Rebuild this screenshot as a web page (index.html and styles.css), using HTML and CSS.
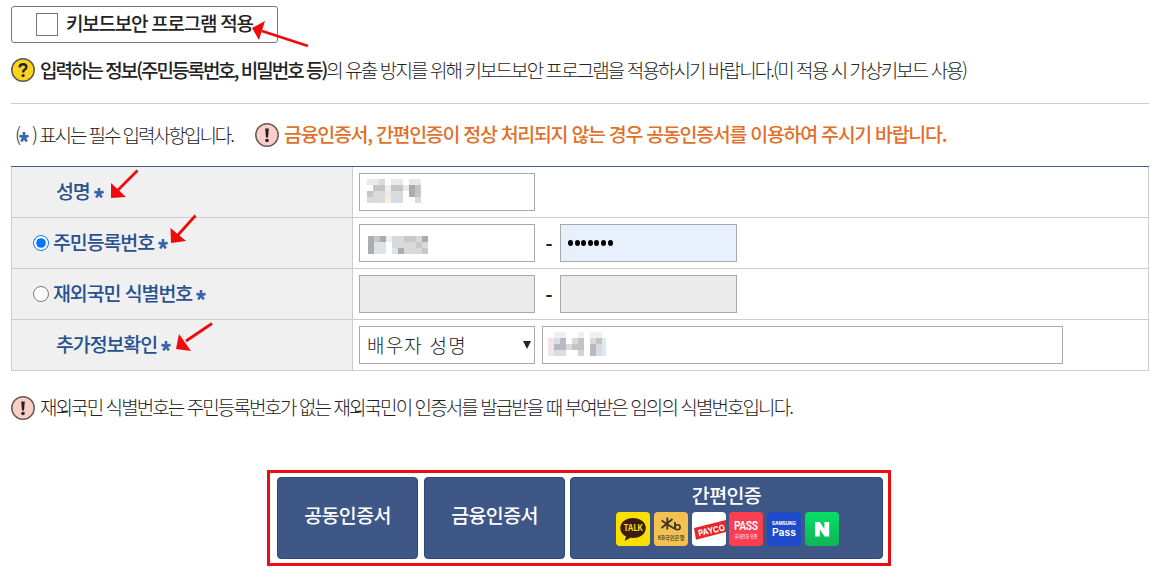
FILE: index.html
```
<!DOCTYPE html>
<html lang="ko">
<head>
    <meta charset="UTF-8">
    <meta name="viewport" content="width=device-width, initial-scale=1.0">
    <title>본인확인</title>
    <link rel="stylesheet" href="styles.css">
</head>
<body>
    <main class="page">
        <label class="security">
            <input type="checkbox" class="security-check">
            <span class="security-text">키보드보안 프로그램 적용</span>
        </label>

        <p class="guide">
            <svg class="icon" viewBox="0 0 24 24"><circle cx="12" cy="12" r="11.2" fill="#fbd51d" stroke="#5a5550" stroke-width="1.5"/><path d="M8.6 9.4Q8.8 6.3 12 6.3Q15.4 6.3 15.4 9.1Q15.4 10.7 13.6 11.8Q12.1 12.7 12.1 14.4" fill="none" stroke="#222" stroke-width="2.4"/><circle cx="12.1" cy="17.5" r="1.6" fill="#222"/></svg>
            <span class="guide-text"><b>입력하는 정보(주민등록번호, 비밀번호 등)</b>의 유출 방지를 위해 키보드보안 프로그램을 적용하시기 바랍니다.(미 적용 시 가상키보드 사용)</span>
        </p>

        <div class="notice">
            <span class="notice-required">(<svg class="star" viewBox="0 0 10 10"><path d="M5 5.2V0M5 5.2L.4 3.7M5 5.2L9.6 3.7M5 5.2L2.2 9.4M5 5.2L7.8 9.4"/></svg> ) 표시는 필수 입력사항입니다.</span>
            <svg class="icon" viewBox="0 0 24 24"><circle cx="12" cy="12" r="11.2" fill="#fbcfc7" stroke="#6a5a5a" stroke-width="1.5"/><path d="M10.2 5.5H13.8L13 14.4H11Z" fill="#222"/><circle cx="12" cy="17.5" r="1.8" fill="#222"/></svg>
            <strong class="notice-warn">금융인증서, 간편인증이 정상 처리되지 않는 경우 공동인증서를 이용하여 주시기 바랍니다.</strong>
        </div>

        <form class="form">
            <div class="row">
                <div class="head head-indent">
                    <span class="label">성명</span>
                    <svg class="star" viewBox="0 0 10 10"><path d="M5 5.2V0M5 5.2L.4 3.7M5 5.2L9.6 3.7M5 5.2L2.2 9.4M5 5.2L7.8 9.4"/></svg>
                </div>
                <div class="cell">
                    <div class="field">
                        <svg class="mosaic" width="54" height="24" viewBox="0 0 9 4" shape-rendering="crispEdges">
                            <path fill="#e9e9ea" d="M0 0h2v1h-2zM4 0h2v1h-2zM7 0h2v1h-2zM3 2h1v1h-1zM6 1h1v1h-1z"/>
                            <path fill="#d9dadb" d="M2 0h1v1h-1zM0 3h3v1h-3zM1 2h2v1h-2zM4 2h1v1h-1zM5 3h1v1h-1zM8 3h1v1h-1z"/>
                            <path fill="#c5c5c6" d="M1 1h2v1h-2zM0 2h1v1h-1zM4 1h2v1h-2zM8 1h1v2h-1z"/>
                            <path fill="#acacac" d="M7 1h1v2h-1z"/>
                            <path fill="#d2dbe8" d="M5 2h1v1h-1zM4 3h1v1h-1z"/>
                            <path fill="#f5eee4" d="M3 1h1v1h-1zM3 3h1v1h-1z"/>
                        </svg>
                    </div>
                </div>
            </div>

            <div class="row">
                <div class="head">
                    <input type="radio" name="kind" class="radio" checked>
                    <span class="label">주민등록번호</span>
                    <svg class="star" viewBox="0 0 10 10"><path d="M5 5.2V0M5 5.2L.4 3.7M5 5.2L9.6 3.7M5 5.2L2.2 9.4M5 5.2L7.8 9.4"/></svg>
                </div>
                <div class="cell">
                    <div class="field">
                        <svg class="mosaic mosaic-number" width="60" height="18" viewBox="0 0 10 3" shape-rendering="crispEdges">
                            <path fill="#acacae" d="M0 0h1v3h-1zM2 0h1v1h-1zM5 2h1v1h-1zM9 0h1v1h-1z"/>
                            <path fill="#c8c8ca" d="M1 0h1v1h-1zM6 0h2v1h-2zM9 2h1v1h-1zM8 1h1v1h-1z"/>
                            <path fill="#d9d9da" d="M4 0h2v2h-2zM6 1h2v2h-2zM8 0h1v1h-1zM8 2h1v1h-1zM9 1h1v1h-1z"/>
                            <path fill="#dde3eb" d="M1 1h2v2h-2zM4 2h1v1h-1z"/>
                            <path fill="#f0f0f0" d="M3 0h1v1h-1z"/>
                        </svg>
                    </div>
                    <span class="dash">-</span>
                    <div class="field field-auto">
                        <span class="dots"><i></i><i></i><i></i><i></i><i></i><i></i><i></i></span>
                    </div>
                </div>
            </div>

            <div class="row">
                <div class="head">
                    <input type="radio" name="kind" class="radio">
                    <span class="label">재외국민 식별번호</span>
                    <svg class="star" viewBox="0 0 10 10"><path d="M5 5.2V0M5 5.2L.4 3.7M5 5.2L9.6 3.7M5 5.2L2.2 9.4M5 5.2L7.8 9.4"/></svg>
                </div>
                <div class="cell">
                    <div class="field field-disabled"></div>
                    <span class="dash">-</span>
                    <div class="field field-disabled field-second"></div>
                </div>
            </div>

            <div class="row">
                <div class="head head-indent">
                    <span class="label">추가정보확인</span>
                    <svg class="star" viewBox="0 0 10 10"><path d="M5 5.2V0M5 5.2L.4 3.7M5 5.2L9.6 3.7M5 5.2L2.2 9.4M5 5.2L7.8 9.4"/></svg>
                </div>
                <div class="cell">
                    <div class="field select">
                        <span class="select-text">배우자 성명</span>
                        <svg class="caret" viewBox="0 0 8 8"><path d="M0 0H8L4 8Z" fill="#222"/></svg>
                    </div>
                    <div class="field field-wide">
                        <svg class="mosaic mosaic-spouse" width="58" height="24" viewBox="0 0 58 24" shape-rendering="crispEdges">
                            <path fill="#f0e5e6" d="M0 6h6v18h-6z"/>
                            <path fill="#f0f0f1" d="M6 0h12v6h-12zM30 0h6v6h-6zM42 0h12v6h-12z"/>
                            <path fill="#d8dce5" d="M6 6h6v6h-6zM6 18h12v6h-12zM48 18h6v6h-6z"/>
                            <path fill="#b9bac1" d="M12 6h6v6h-6zM6 12h12v6h-12zM42 12h6v12h-6z"/>
                            <path fill="#dadadb" d="M18 12h6v6h-6zM24 6h6v6h-6zM42 6h6v6h-6zM48 12h6v6h-6z"/>
                            <path fill="#c5c3c4" d="M24 12h6v6h-6zM30 6h6v12h-6zM48 6h6v6h-6z"/>
                            <path fill="#dbcfca" d="M30 18h6v6h-6z"/>
                            <path fill="#d9eaf5" d="M54 6h4v18h-4z"/>
                        </svg>
                    </div>
                </div>
            </div>
        </form>

        <p class="footnote">
            <svg class="icon" viewBox="0 0 24 24"><circle cx="12" cy="12" r="11.2" fill="#fbcfc7" stroke="#6a5a5a" stroke-width="1.5"/><path d="M10.2 5.5H13.8L13 14.4H11Z" fill="#222"/><circle cx="12" cy="17.5" r="1.8" fill="#222"/></svg>
            <span class="footnote-text">재외국민 식별번호는 주민등록번호가 없는 재외국민이 인증서를 발급받을 때 부여받은 임의의 식별번호입니다.</span>
        </p>

        <div class="certs">
            <button class="cert">공동인증서</button>
            <button class="cert">금융인증서</button>
            <button class="cert cert-simple">
                <span>간편인증</span>
                <span class="apps">
                    <svg class="app" viewBox="0 0 34 34"><rect width="34" height="34" rx="4" fill="#f9e000"/><path d="M17 6C10 6 4.3 10.3 4.3 16C4.3 19.8 6.5 22.7 10 24.4L8.7 29L14.4 25.8C24 26.8 29.8 22 29.8 16C29.8 10.3 24 6 17 6Z" fill="#3a1d12"/><text x="7.5" y="19.3" textLength="19.5" lengthAdjust="spacingAndGlyphs" font-size="8.8" font-weight="700" fill="#f9e000">TALK</text></svg>
                    <svg class="app" viewBox="0 0 34 34"><rect width="34" height="34" rx="4" fill="#f4c04e"/><path d="M13.3 5.5V17.5M7.5 8.5L20 16.5M18.5 7L7.5 16M21 10V17.5" fill="none" stroke="#3d352c" stroke-width="1.8"/><circle cx="23.6" cy="15.2" r="2.5" fill="none" stroke="#3d352c" stroke-width="1.6"/><text class="app-ko" x="3.8" y="28.2" textLength="26.5" lengthAdjust="spacingAndGlyphs" font-size="5.6" fill="#3d352c">KB국민은행</text></svg>
                    <svg class="app" viewBox="0 0 34 34"><rect width="34" height="34" rx="4" fill="#fff"/><path d="M2 16L34 8V20L4 27.7Z" fill="#e8252b"/><text x="7" y="24.3" textLength="27" lengthAdjust="spacingAndGlyphs" font-size="8.5" font-weight="700" fill="#fff" transform="rotate(-13 7 24.3)">PAYCO</text></svg>
                    <svg class="app" viewBox="0 0 34 34"><rect width="34" height="34" rx="4" fill="#fc3e50"/><text x="5" y="18" textLength="24" lengthAdjust="spacing" font-size="12" font-weight="500" fill="#fff" class="app-narrow">PASS</text><text class="app-ko" x="5.5" y="25.5" textLength="23" lengthAdjust="spacingAndGlyphs" font-size="4.8" fill="#ffdcdf">휴대전화 인증</text></svg>
                    <svg class="app" viewBox="0 0 34 34"><rect width="34" height="34" rx="4" fill="#1e4bc9"/><text x="5" y="13" textLength="24" lengthAdjust="spacingAndGlyphs" font-size="4.6" font-weight="700" fill="#fff">SAMSUNG</text><text x="5" y="23.5" textLength="24" lengthAdjust="spacingAndGlyphs" font-size="10" font-weight="600" fill="#fff">Pass</text></svg>
                    <svg class="app" viewBox="0 0 34 34"><defs><linearGradient id="naver" x1="0" y1="0" x2="0" y2="1"><stop offset="0" stop-color="#05e067"/><stop offset="1" stop-color="#0fb556"/></linearGradient></defs><rect width="34" height="34" rx="4" fill="url(#naver)"/><path d="M10 10H14.8L19.4 17V10H24.2V24.4H19.6L14.8 17.4V24.4H10Z" fill="#fff"/></svg>
                </span>
            </button>
        </div>

        <!-- pointer arrows drawn over the form -->
        <svg class="arrows" viewBox="0 0 1155 571">
            <path d="M308 46L262 31M137.5 170.5L118 190M195.5 215.5L178 235M212 323.5L186 341"/>
            <path class="tips" d="M252 28L265 21L259 40ZM111 183L111 198L126 197ZM170.5 228L171 243L186 241ZM179 334L176 349L191 351Z"/>
        </svg>
    </main>
</body>
</html>
```

FILE: styles.css
```
* {
    margin: 0;
    padding: 0;
    box-sizing: border-box;
}

body {
    width: 1155px;
    height: 571px;
    overflow: hidden;
    background: #fff;
    color: #222;
    font-family: "Noto Sans CJK KR", sans-serif;
    font-size: 19px;
    font-weight: 300;
}

.page {
    position: relative;
    height: 571px;
    padding: 6px 6px 0 11px;
}

.security {
    display: flex;
    align-items: center;
    width: 267px;
    height: 37px;
    padding-left: 24px;
    border: 1px solid #777;
    border-radius: 3px;
    font-size: 19px;
    font-weight: 500;
    letter-spacing: -1.25px;
    white-space: nowrap;
}

.security-check {
    appearance: none;
    width: 22px;
    height: 23px;
    margin-right: 8px;
    border: 1px solid #767676;
}

.security-text {
    padding-bottom: 4px;
}

.guide {
    display: flex;
    align-items: center;
    height: 61px;
    padding-bottom: 7px;
    border-bottom: 1px solid #ccc;
    white-space: nowrap;
}

.icon {
    flex: none;
    width: 24px;
    height: 24px;
}

.guide-text {
    margin-left: 5px;
    padding-bottom: 1px;
    letter-spacing: -1.92px;
}

.guide-text b {
    font-weight: 500;
    letter-spacing: -2px;
}

.notice {
    display: flex;
    align-items: center;
    height: 62px;
    padding-left: 4px;
    white-space: nowrap;
}

.notice-required {
    width: 240px;
    padding-bottom: 2px;
    letter-spacing: -2.1px;
}

.notice-warn {
    margin-left: 5px;
    padding-bottom: 3px;
    color: #e0702a;
    font-size: 19.5px;
    font-weight: 500;
    letter-spacing: -1.3px;
}

.star {
    flex: none;
    width: 10px;
    height: 10px;
}

.notice-required .star {
    vertical-align: 1px;
}

.star path {
    fill: none;
    stroke: #3a65ab;
    stroke-width: 2.6;
}

.form {
    border-top: 1px solid #3f5f85;
}

.row {
    display: flex;
    height: 51px;
    border: 1px solid #ccc;
    border-top: 0;
}

.head {
    display: flex;
    align-items: center;
    width: 341px;
    padding-left: 21px;
    background: #f0f0f0;
    border-right: 1px solid #ccc;
    color: #27508f;
    font-size: 19.5px;
    font-weight: 500;
    letter-spacing: -1.1px;
    white-space: nowrap;
}

.head-indent {
    padding-left: 44px;
}

.label {
    padding-bottom: 4px;
}

.head .star {
    margin: 1px 0 0 4px;
}

.radio {
    width: 16px;
    height: 16px;
    margin-right: 4px;
}

.cell {
    display: flex;
    align-items: center;
    padding-left: 6px;
}

.field {
    display: flex;
    align-items: center;
    width: 176px;
    height: 38px;
    padding-left: 7px;
    border: 1px solid #a9a9a9;
    background: #fff;
}

.mosaic {
    margin-top: -2px;
}

.mosaic-number {
    margin: 4px 0 0 1px;
}

.mosaic-spouse {
    margin: -3px 0 0 -2px;
}

.dash {
    width: 25px;
    padding-left: 3px;
    text-align: center;
    font-weight: 700;
}

.field-auto {
    width: 177px;
    background: #e8effd;
}

.field-disabled {
    background: #ebebeb;
}

.field-second {
    width: 177px;
}

.dots {
    display: flex;
    gap: 1.6px;
    margin-top: -1px;
}

.dots i {
    width: 5px;
    height: 6px;
    border-radius: 50%;
    background: #000;
}

.select {
    position: relative;
    letter-spacing: 1.2px;
}

.select-text {
    padding-bottom: 2px;
}

.caret {
    position: absolute;
    right: 3px;
    width: 8px;
    height: 8px;
}

.field-wide {
    width: 521px;
    margin-left: 7px;
}

.footnote {
    display: flex;
    align-items: center;
    height: 74px;
    white-space: nowrap;
}

.footnote-text {
    margin-left: 5px;
    padding-bottom: 3px;
    letter-spacing: -1.93px;
}

.certs {
    display: flex;
    gap: 6px;
    width: 624px;
    height: 96px;
    margin: 25px 0 0 256px;
    padding: 4px 4px 4px 7px;
    border: 3px solid #ec0d13;
}

.cert {
    width: 141px;
    height: 82px;
    background: #3f5787;
    border: 1px solid #2a4878;
    border-radius: 4px;
    color: #fff;
    font-family: inherit;
    font-size: 19.5px;
    font-weight: 500;
    letter-spacing: -0.6px;
    padding-bottom: 8px;
}

.cert-simple {
    display: flex;
    flex-direction: column;
    align-items: center;
    width: 313px;
    margin-left: -1px;
    padding: 3px 0 0;
    line-height: 28px;
}

.apps {
    display: flex;
    gap: 3.8px;
    margin: 3px 0 0 2px;
}

.app {
    width: 34px;
    height: 34px;
    font-family: Inter, "Liberation Sans", sans-serif;
    letter-spacing: 0;
}

.app-ko {
    font-family: "Noto Sans CJK KR", sans-serif;
}

.app-narrow {
    font-family: Roboto, sans-serif;
    font-stretch: condensed;
}

.arrows {
    position: absolute;
    top: 0;
    left: 0;
    width: 1155px;
    height: 571px;
    pointer-events: none;
    fill: none;
    stroke: #f00a0a;
    stroke-width: 2.8;
}

.arrows .tips {
    fill: #f00a0a;
    stroke: none;
}
```
